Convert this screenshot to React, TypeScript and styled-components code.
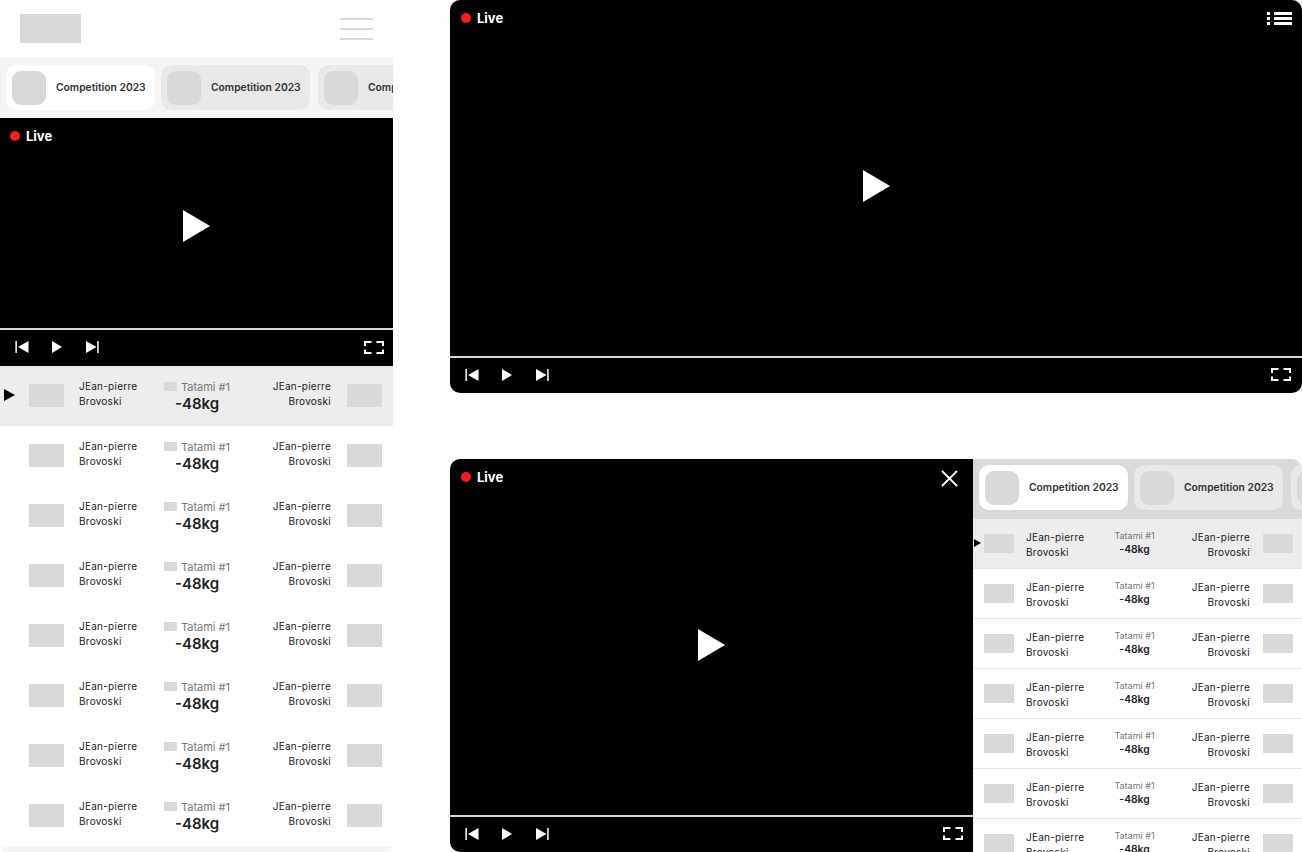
import React from 'react';
import styled, { createGlobalStyle } from 'styled-components';

const GlobalStyle = createGlobalStyle`
  html, body {
    margin: 0;
    background: #fff;
  }
  * {
    box-sizing: border-box;
  }
  body {
    font-family: Inter, "Noto Sans", "Liberation Sans", sans-serif;
  }
`;

const ROW_COUNT = 8;
const PANEL_ROW_COUNT = 7;

const Marker = ({ width, height }: { width: number; height: number }) => (
  <svg width={width} height={height} viewBox="0 0 10 12" preserveAspectRatio="none">
    <path d="M0 0 L10 6 L0 12 Z" fill="currentColor" />
  </svg>
);

function Controls({ inset, tall }: { inset: number; tall?: boolean }) {
  return (
    <ControlBar $inset={inset} $tall={tall}>
      <Transport>
        <svg width="14" height="12" viewBox="0 0 14 12">
          <rect x="0.4" y="0" width="1.5" height="12" fill="#fff" />
          <path d="M3 6 L13.5 0 V12 Z" fill="#fff" />
        </svg>
        <svg width="10" height="12" viewBox="0 0 10 12">
          <path d="M0 0 L10 6 L0 12 Z" fill="#fff" />
        </svg>
        <svg width="14" height="12" viewBox="0 0 14 12">
          <path d="M1 0 L11.5 6 L1 12 Z" fill="#fff" />
          <rect x="12.2" y="0" width="1.5" height="12" fill="#fff" />
        </svg>
      </Transport>
      <svg width="20" height="13" viewBox="0 0 20 13" fill="none" stroke="#fff" strokeWidth="2">
        <path d="M1 5 V1 H7.5 M12.5 1 H19 V5 M19 8.5 V12 H12.5 M7.5 12 H1 V8.5" />
      </svg>
    </ControlBar>
  );
}

type PlayerProps = {
  top?: React.ReactNode;
  mobile?: boolean;
  controlInset: number;
};

function Player({ top, mobile, controlInset }: PlayerProps) {
  return (
    <Video>
      <Stage $mobile={mobile}>
        <LiveBadge $mobile={mobile}>
          <LiveDot />
          Live
        </LiveBadge>
        {top}
        <svg width="27" height="32" viewBox="0 0 10 12" preserveAspectRatio="none">
          <path d="M0 0 L10 6 L0 12 Z" fill="#fff" />
        </svg>
      </Stage>
      <Progress />
      <Controls inset={controlInset} tall={mobile} />
    </Video>
  );
}

function CompetitionTabs({ $dark }: { $dark?: boolean }) {
  return (
    <TabStrip $dark={$dark}>
      {[0, 1, 2].map((i) => (
        <Tab key={i} $active={i === 0}>
          <TabThumb />
          <TabLabel>Competition 2023</TabLabel>
        </Tab>
      ))}
    </TabStrip>
  );
}

function FightRow({ active, compact }: { active?: boolean; compact?: boolean }) {
  return (
    <Row $active={active} $compact={compact}>
      {active && (
        <RowMarker $compact={compact}>
          {compact ? <Marker width={7} height={8} /> : <Marker width={11} height={12} />}
        </RowMarker>
      )}
      <Side $compact={compact}>
        <Thumb $compact={compact} />
        <Name $compact={compact}>
          JEan-pierre
          <br />
          Brovoski
        </Name>
      </Side>
      <Middle $compact={compact}>
        <Tatami $compact={compact}>
          {!compact && <TatamiFlag />}
          Tatami #1
        </Tatami>
        <Weight $compact={compact}>-48kg</Weight>
      </Middle>
      <Side $compact={compact} $right>
        <Name $compact={compact} $right>
          JEan-pierre
          <br />
          Brovoski
        </Name>
        <Thumb $compact={compact} />
      </Side>
    </Row>
  );
}

export default function App() {
  return (
    <Page>
      <GlobalStyle />
      <MobileColumn>
        <Header>
          <Logo />
          <Burger>
            <span />
            <span />
            <span />
          </Burger>
        </Header>
        <CompetitionTabs />
        <MobileVideo>
          <Player mobile controlInset={9} />
        </MobileVideo>
        <FightList>
          {Array.from({ length: ROW_COUNT }).map((_, i) => (
            <FightRow key={i} active={i === 0} />
          ))}
        </FightList>
      </MobileColumn>
      <DesktopColumn>
        <DesktopFrame>
          <Player
            controlInset={11}
            top={
              <TopAction $top={12} $right={10}>
                <svg width="25" height="13" viewBox="0 0 25 13" fill="#fff">
                  <rect x="0" y="0" width="3" height="3" />
                  <rect x="0" y="5" width="3" height="3" />
                  <rect x="0" y="10" width="3" height="3" />
                  <rect x="7" y="0" width="18" height="3" />
                  <rect x="7" y="5" width="18" height="3" />
                  <rect x="7" y="10" width="18" height="3" />
                </svg>
              </TopAction>
            }
          />
        </DesktopFrame>
        <DesktopFrame>
          <SplitVideo>
            <Player
              controlInset={10}
              top={
                <TopAction $top={11} $right={15}>
                  <svg width="17" height="17" viewBox="0 0 17 17" stroke="#fff" strokeWidth="1.8" fill="none">
                    <path d="M1 1 L16 16 M16 1 L1 16" />
                  </svg>
                </TopAction>
              }
            />
          </SplitVideo>
          <SidePanel>
            <CompetitionTabs $dark />
            {Array.from({ length: PANEL_ROW_COUNT }).map((_, i) => (
              <FightRow key={i} active={i === 0} compact />
            ))}
          </SidePanel>
        </DesktopFrame>
      </DesktopColumn>
    </Page>
  );
}

const Page = styled.div`
  display: flex;
  gap: 57px;
  width: 1302px;
  height: 852px;
  overflow: hidden;
`;

const MobileColumn = styled.div`
  display: flex;
  flex-direction: column;
  flex: none;
  width: 393px;
  background: #f5f5f5;
  border-radius: 0 0 8px 8px;
  overflow: hidden;
`;

const Header = styled.div`
  display: flex;
  flex: none;
  align-items: center;
  justify-content: space-between;
  height: 57px;
  padding: 0 20px;
  background: #fff;
`;

const Logo = styled.div`
  width: 61px;
  height: 29px;
  background: #d9d9d9;
`;

const Burger = styled.div`
  display: flex;
  flex-direction: column;
  gap: 8px;
  width: 33px;

  span {
    height: 2px;
    background: #d9d9d9;
  }
`;

const TabStrip = styled.div<{ $dark?: boolean }>`
  display: flex;
  flex: none;
  align-items: flex-start;
  gap: 6px;
  height: ${(p) => (p.$dark ? '60px' : '61px')};
  padding: ${(p) => (p.$dark ? '6px' : '8px')} 6px 0;
  background: ${(p) => (p.$dark ? '#d9d9d9' : '#f5f5f5')};
  overflow: hidden;
`;

const Tab = styled.div<{ $active?: boolean }>`
  display: flex;
  flex: none;
  align-items: center;
  gap: 10px;
  width: 149px;
  height: 45px;
  padding: 0 6px;
  border-radius: 10px;
  background: ${(p) => (p.$active ? '#fff' : '#e8e8e8')};

  &:nth-child(3) {
    margin-left: 2px;
  }
`;

const TabThumb = styled.div`
  flex: none;
  width: 34px;
  height: 34px;
  border-radius: 9px;
  background: #d9d9d9;
`;

const TabLabel = styled.span`
  margin-bottom: 2px;
  font-size: 10.3px;
  font-weight: 600;
  color: #333;
  white-space: nowrap;
`;

const MobileVideo = styled.div`
  display: flex;
  flex: none;
  height: 248px;
`;

const Video = styled.div`
  display: flex;
  flex-direction: column;
  flex: 1;
  height: 100%;
  background: #000;
`;

const Stage = styled.div<{ $mobile?: boolean }>`
  position: relative;
  display: flex;
  flex: 1;
  align-items: center;
  justify-content: center;
  padding-top: ${(p) => (p.$mobile ? '5px' : '16px')};
`;

const LiveBadge = styled.div<{ $mobile?: boolean }>`
  position: absolute;
  top: 10px;
  left: ${(p) => (p.$mobile ? '10px' : '11px')};
  display: flex;
  align-items: center;
  gap: 6px;
  font-size: 13px;
  font-weight: 700;
  line-height: 16px;
  color: #fff;
`;

const LiveDot = styled.span`
  width: 10px;
  height: 10px;
  border-radius: 50%;
  background: #ff1a1a;
`;

const TopAction = styled.div<{ $top: number; $right: number }>`
  position: absolute;
  top: ${(p) => p.$top}px;
  right: ${(p) => p.$right}px;
  line-height: 0;
`;

const Progress = styled.div`
  flex: none;
  height: 2px;
  background: #d9d9d9;
`;

const ControlBar = styled.div<{ $inset: number; $tall?: boolean }>`
  display: flex;
  flex: none;
  align-items: center;
  justify-content: space-between;
  height: ${(p) => (p.$tall ? '36px' : '35px')};
  padding: 0 ${(p) => p.$inset}px 2px 15px;
`;

const Transport = styled.div`
  display: flex;
  align-items: center;
  gap: 23px;
`;

const FightList = styled.div`
  display: flex;
  flex-direction: column;
`;

const Row = styled.div<{ $active?: boolean; $compact?: boolean }>`
  position: relative;
  display: grid;
  flex: none;
  grid-template-columns: ${(p) => (p.$compact ? '130px 41px 1fr' : '134px 68px 1fr')};
  align-items: center;
  height: ${(p) => (p.$compact ? '50px' : '60px')};
  padding: ${(p) => (p.$compact ? '0 9px 0 11px' : '0 11px 0 29px')};
  background: ${(p) => (p.$active ? '#ececec' : '#fff')};
  border-bottom: ${(p) => (p.$compact ? '1px solid #e6e6e6' : 'none')};
`;

const RowMarker = styled.div<{ $compact?: boolean }>`
  position: absolute;
  top: ${(p) => (p.$compact ? '20px' : '23px')};
  left: ${(p) => (p.$compact ? '1px' : '4px')};
  line-height: 0;
  color: #000;
`;

const Side = styled.div<{ $right?: boolean; $compact?: boolean }>`
  display: flex;
  align-items: center;
  justify-content: ${(p) => (p.$right ? 'flex-end' : 'flex-start')};
  gap: ${(p) => {
    if (p.$compact) return p.$right ? '13px' : '12px';
    return p.$right ? '16px' : '15px';
  }};
`;

const Thumb = styled.div<{ $compact?: boolean }>`
  flex: none;
  width: ${(p) => (p.$compact ? '30px' : '35px')};
  height: ${(p) => (p.$compact ? '19px' : '23px')};
  margin-bottom: ${(p) => (p.$compact ? '0' : '1px')};
  background: #d9d9d9;
`;

const Name = styled.div<{ $compact?: boolean; $right?: boolean }>`
  margin: ${(p) => (p.$compact ? '2px 0 0' : '0 0 4px')};
  font-size: 10px;
  line-height: 15px;
  letter-spacing: 0.25px;
  color: #222;
  text-align: ${(p) => (p.$right ? 'right' : 'left')};
`;

const Middle = styled.div<{ $compact?: boolean }>`
  display: flex;
  flex-direction: column;
  align-items: center;
  gap: ${(p) => (p.$compact ? '2px' : '1px')};
`;

const Tatami = styled.div<{ $compact?: boolean }>`
  display: flex;
  align-items: center;
  gap: 4px;
  font-size: ${(p) => (p.$compact ? '9px' : '11px')};
  line-height: ${(p) => (p.$compact ? '10px' : '14px')};
  color: #777;
  white-space: nowrap;
`;

const TatamiFlag = styled.span`
  width: 13px;
  height: 9px;
  margin-bottom: 1px;
  background: #d9d9d9;
`;

const Weight = styled.div<{ $compact?: boolean }>`
  font-size: ${(p) => (p.$compact ? '10.3px' : '15px')};
  font-weight: 600;
  line-height: ${(p) => (p.$compact ? '13px' : '18px')};
  color: #222;
`;

const DesktopColumn = styled.div`
  display: flex;
  flex-direction: column;
  gap: 66px;
  width: 852px;
`;

const DesktopFrame = styled.div`
  display: flex;
  flex: none;
  height: 393px;
  border-radius: 10px;
  overflow: hidden;
`;

const SplitVideo = styled.div`
  display: flex;
  flex: none;
  width: 523px;
`;

const SidePanel = styled.div`
  display: flex;
  flex-direction: column;
  flex: 1;
  min-width: 0;
  overflow: hidden;
`;
